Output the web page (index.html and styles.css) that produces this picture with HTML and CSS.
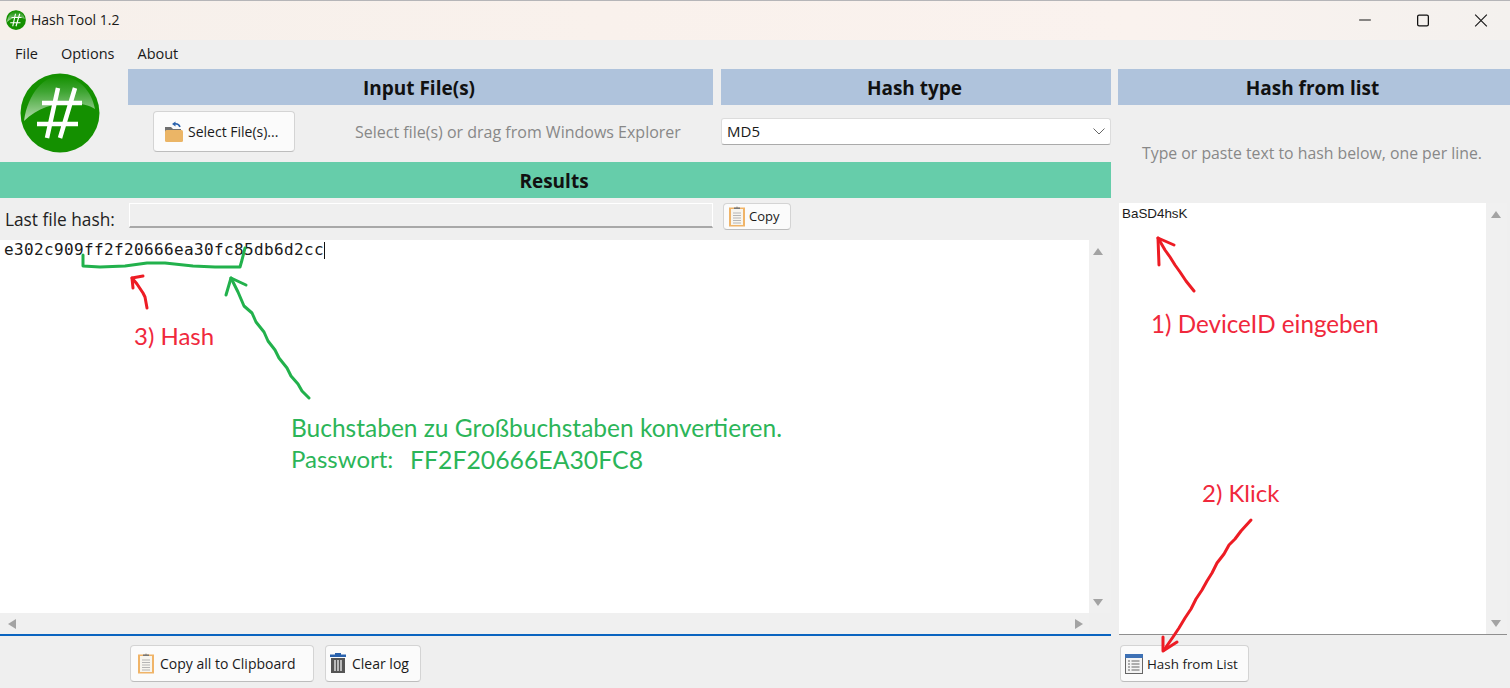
FILE: index.html
```html
<!DOCTYPE html>
<html lang="de">
<head>
    <meta charset="UTF-8">
    <meta name="viewport" content="width=device-width, initial-scale=1.0">
    <title>Hash Tool 1.2</title>
    <link rel="stylesheet" href="styles.css">
</head>
<body>
    <svg class="icon-defs" width="0" height="0">
        <defs>
            <linearGradient id="gloss" x1="0" y1="0" x2="0" y2="1">
                <stop offset="0" stop-color="#149000"/>
                <stop offset="0.35" stop-color="#3fa533"/>
                <stop offset="1" stop-color="#b4dcae"/>
            </linearGradient>
            <symbol id="hash-logo" viewBox="0 0 80 80">
                <circle cx="40" cy="40" r="39.500" fill="#149000"/>
                <path d="M4 48C8 20 24 3 40 3 58 3 72 18 75 36 62 27 26 26 4 48z" fill="url(#gloss)"/>
                <path d="M38 15 27 65M55 15 40 65M22 30H62M17 51H58" stroke="#fff" stroke-width="4.500" fill="none"/>
            </symbol>
            <g id="clip-icon">
                <rect x="1" y="2.500" width="16" height="19" fill="#f0b468"/>
                <rect x="3" y="4" width="12" height="16" fill="#f7f5ef"/>
                <path d="M5 8h8M5 10.500h8M5 13h8M5 15.500h8M5 18h8" stroke="#b5b5b5" stroke-width="1"/>
                <path d="M6 4V2.500h2.500L9 1l.5 1.500H12V4z" fill="#777"/>
            </g>
        </defs>
    </svg>

    <div class="titlebar">
        <svg class="title-logo"><use href="#hash-logo"/></svg>
        <span class="title-text">Hash Tool 1.2</span>
        <div class="win-buttons">
            <svg class="win-btn" viewBox="0 0 58 40"><path d="M23 19.500H35" stroke="#111" stroke-width="1"/></svg>
            <svg class="win-btn" viewBox="0 0 58 40"><rect x="23.500" y="14.500" width="11" height="11" rx="1.500" fill="none" stroke="#111" stroke-width="1.300"/></svg>
            <svg class="win-btn" viewBox="0 0 58 40"><path d="M23 14 35 26M35 14 23 26" stroke="#111" stroke-width="1.100"/></svg>
        </div>
    </div>

    <div class="menubar">
        <span>File</span>
        <span>Options</span>
        <span>About</span>
    </div>

    <div class="main">
        <div class="left">
            <div class="top">
                <div class="logo">
                    <svg width="80" height="80"><use href="#hash-logo"/></svg>
                </div>
                <div class="input-col">
                    <div class="head blue">Input File(s)</div>
                    <div class="input-row">
                        <button class="btn select-btn">
                            <svg width="20" height="22" viewBox="0 0 20 22">
                                <path d="M1 6h6l2 2h8v3H1z" fill="#6f6f6f"/>
                                <rect x="1" y="9" width="18" height="12" rx="1.500" fill="#ebb566"/>
                                <path d="M16 6C15 3 13 2.500 10 3" fill="none" stroke="#2a62ad" stroke-width="1.500"/>
                                <path d="M8 3l3.500-2.500v5z" fill="#2a62ad"/>
                            </svg>
                            Select File(s)...
                        </button>
                        <span class="hint">Select file(s) or drag from Windows Explorer</span>
                    </div>
                </div>
                <div class="type-col">
                    <div class="head blue">Hash type</div>
                    <div class="type-row">
                        <div class="combo">
                            <span>MD5</span>
                            <svg width="12" height="7" viewBox="0 0 12 7"><path d="M.5 .5 6 6 11.500 .5" fill="none" stroke="#666" stroke-width="1"/></svg>
                        </div>
                    </div>
                </div>
            </div>

            <div class="head green">Results</div>

            <div class="last-row">
                <span class="last-label">Last file hash:</span>
                <div class="last-field"></div>
                <button class="btn copy-btn">
                    <svg width="18" height="22" viewBox="0 0 18 22"><use href="#clip-icon"/></svg>
                    Copy
                </button>
            </div>

            <div class="log">
                <div class="log-text">e302c909ff2f20666ea30fc85db6d2cc<span class="caret"></span></div>
                <div class="vscroll">
                    <span class="arrow up"></span>
                    <span class="arrow down"></span>
                </div>
                <div class="hscroll">
                    <span class="arrow left-arrow"></span>
                    <span class="arrow right-arrow"></span>
                </div>
                <div class="corner"></div>
            </div>

            <div class="bottom-left">
                <button class="btn clip-all">
                    <svg width="18" height="22" viewBox="0 0 18 22"><use href="#clip-icon"/></svg>
                    Copy all to Clipboard
                </button>
                <button class="btn clear-btn">
                    <svg width="18" height="22" viewBox="0 0 18 22">
                        <rect x="1" y="2.500" width="16" height="2.500" fill="#2a62ad"/>
                        <rect x="6" y="1" width="6" height="2" fill="#2a62ad"/>
                        <rect x="2" y="6" width="14" height="15" fill="#555"/>
                        <path d="M6 8v11M9 8v11M12 8v11" stroke="#ddd" stroke-width="1.500"/>
                    </svg>
                    Clear log
                </button>
            </div>
        </div>

        <div class="right">
            <div class="head blue">Hash from list</div>
            <div class="right-hint">Type or paste text to hash below, one per line.</div>
            <div class="list-box">
                <div class="list-text">BaSD4hsK</div>
                <div class="vscroll">
                    <span class="arrow up"></span>
                    <span class="arrow down"></span>
                </div>
            </div>
            <div class="bottom-right">
                <button class="btn list-btn">
                    <svg width="18" height="22" viewBox="0 0 18 22">
                        <rect x=".5" y="1.500" width="17" height="19" fill="#f4f4f4" stroke="#666"/>
                        <rect x="0" y="1" width="18" height="4" fill="#3e71b5"/>
                        <path d="M3 8h2M3 11h2M3 14h2M3 17h2M6.500 8h8M6.500 11h8M6.500 14h8M6.500 17h8" stroke="#666" stroke-width="1.200"/>
                    </svg>
                    Hash from List
                </button>
            </div>
        </div>
    </div>

    <!-- hand drawn notes on top of the screenshot -->
    <svg class="scribble" width="1510" height="688" viewBox="0 0 1510 688">
        <g class="ink-green">
            <path d="M83 255 83 266 100 267 125 266 147 263 165 263 193 266 215 267 240 267 242 260 245 248"/>
            <path d="M309 398 302 391 298 384 291 376 287 368 279 358 275 350 268 341 264 332 256 322 252 313 244 306 238 292 231 278"/>
            <path d="M226 295 231 278 246 285"/>
        </g>
        <g class="ink-red">
            <path d="M147 308 145 297 143 293 137 284 132 278"/>
            <path d="M133 288 132 278 143 276"/>
            <path d="M1194 291 1186 281 1180 272 1175 265 1170 257 1165 250 1158 238"/>
            <path d="M1159 265 1158 238 1174 245"/>
            <path d="M1251 520 1241 531 1235 539 1229 545 1224 554 1217 563 1212 573 1207 581 1202 590 1196 599 1191 609 1185 618 1179 628 1173 637 1164 650"/>
            <path d="M1163 637 1163 651 1177 642"/>
        </g>
    </svg>
    <span class="note red note-hash">3) Hash</span>
    <span class="note red note-device">1) DeviceID eingeben</span>
    <span class="note red note-klick">2) Klick</span>
    <span class="note green-ink note-convert">Buchstaben zu Großbuchstaben konvertieren.</span>
    <span class="note green-ink note-pass">Passwort:</span>
    <span class="note green-ink note-value">FF2F20666EA30FC8</span>
</body>
</html>
```

FILE: styles.css
```css
html, body {
    margin: 0;
    height: 100%;
}
body {
    width: 1510px;
    height: 688px;
    overflow: hidden;
    position: relative;
    background: #efefef;
    color: #1a1a1a;
    font-family: "Open Sans", "Noto Sans", sans-serif;
}
.icon-defs {
    position: absolute;
}

.titlebar {
    height: 39px;
    border-top: 1px solid #b5b5b8;
    display: flex;
    align-items: center;
    background: linear-gradient(90deg, #f6f0eb 0%, #f9f1ec 40%, #faf2ee 75%, #f4f1ee 100%);
}
.title-logo {
    width: 20px;
    height: 20px;
    margin-left: 6px;
    margin-top: -2px;
}
.title-text {
    margin-left: 5px;
    margin-top: -2px;
    font-size: 14px;
}
.win-buttons {
    margin-left: auto;
    display: flex;
}
.win-btn {
    width: 58px;
    height: 39px;
    display: block;
}

.menubar {
    height: 26px;
    padding-bottom: 2px;
    display: flex;
    align-items: center;
    gap: 23px;
    padding-left: 15px;
    font-size: 14.500px;
}

.main {
    display: flex;
    gap: 7px;
    padding-top: 1px;
}
.left {
    width: 1111px;
}
.right {
    width: 392px;
}

.top {
    display: flex;
    height: 93px;
}
.logo {
    width: 128px;
    padding: 4px 0 0 20px;
    box-sizing: border-box;
}
.input-col {
    width: 585px;
}
.type-col {
    width: 390px;
    margin-left: 8px;
}
.head {
    height: 36px;
    line-height: 38px;
    padding-right: 3px;
    box-sizing: border-box;
    text-align: center;
    font-weight: 700;
    font-size: 19px;
    color: #111;
}
.blue {
    background: #afc3dc;
}
.green {
    background: #66cdaa;
}

.input-row {
    display: flex;
    align-items: center;
    height: 53px;
}
.btn {
    display: flex;
    align-items: center;
    background: #fbfbfb;
    border: 1px solid #d4d4d4;
    border-bottom-color: #bdbdbd;
    border-radius: 4px;
    padding: 0;
    box-sizing: border-box;
    font-family: inherit;
    font-size: 14px;
    color: #1a1a1a;
}
.select-btn {
    width: 142px;
    height: 41px;
    margin-left: 25px;
    padding-left: 10px;
    gap: 4px;
}
.hint {
    margin-left: 60px;
    font-size: 16px;
    color: #888;
}
.type-row {
    height: 53px;
    display: flex;
    align-items: center;
}
.combo {
    width: 100%;
    height: 27px;
    margin-top: -1px;
    box-sizing: border-box;
    background: #fff;
    border: 1px solid #dcdcdc;
    border-bottom-color: #aaa;
    border-radius: 3px;
    display: flex;
    align-items: center;
    justify-content: space-between;
    padding: 0 5px 0 5px;
    font-size: 15px;
}

.last-row {
    height: 42px;
    display: flex;
    align-items: center;
}
.last-label {
    width: 129px;
    padding-left: 5px;
    box-sizing: border-box;
    font-size: 17.300px;
    color: #222;
}
.last-field {
    width: 584px;
    height: 25px;
    box-sizing: border-box;
    margin-top: -8px;
    border: 1px solid #fff;
    border-bottom: 2px solid #a8a8a8;
    background: #efefef;
}
.copy-btn {
    width: 68px;
    height: 27px;
    margin-left: 10px;
    margin-top: -6px;
    padding-left: 4px;
    gap: 3px;
    font-size: 13px;
}

.log {
    height: 394px;
    display: grid;
    grid-template-columns: 1fr 22px;
    grid-template-rows: 1fr 21px;
}
.log-text {
    background: #fff;
    padding: 0 0 0 4px;
    font-family: "DejaVu Sans Mono", monospace;
    font-size: 16px;
    letter-spacing: 0.370px;
    line-height: 19px;
    color: #1a1a1a;
}
.caret {
    display: inline-block;
    width: 1px;
    height: 17px;
    background: #111;
    vertical-align: -4px;
}
.vscroll {
    background: #f0f0f0;
    display: flex;
    flex-direction: column;
    justify-content: space-between;
    align-items: center;
    padding: 8px 4px 7px 0;
}
.hscroll {
    background: #f0f0f0;
    display: flex;
    justify-content: space-between;
    align-items: center;
    padding: 0 6px 0 8px;
}
.corner {
    background: #efefef;
}
.arrow {
    display: block;
    width: 0;
    height: 0;
    border: 5px solid transparent;
}
.up {
    border-top: 0;
    border-bottom: 7px solid #a3a3a3;
    border-left-width: 5.500px;
    border-right-width: 5.500px;
}
.down {
    border-bottom: 0;
    border-top: 7px solid #a3a3a3;
    border-left-width: 5.500px;
    border-right-width: 5.500px;
}
.left-arrow {
    border-left: 0;
    border-right: 8px solid #a3a3a3;
}
.right-arrow {
    border-right: 0;
    border-left: 8px solid #a3a3a3;
}

.bottom-left {
    border-top: 2px solid #0a64c0;
    height: 50px;
    padding-top: 2px;
    display: flex;
    align-items: center;
    padding-left: 130px;
    gap: 11px;
}
.clip-all {
    width: 184px;
    height: 37px;
    padding-left: 6px;
    gap: 5px;
}
.clear-btn {
    width: 96px;
    height: 37px;
    padding-left: 3px;
    gap: 5px;
}

.right-hint {
    height: 96px;
    padding-bottom: 2px;
    display: flex;
    align-items: center;
    justify-content: center;
    padding-right: 4px;
    font-size: 15.800px;
    color: #888;
}
.list-box {
    height: 432px;
    margin-left: 1px;
    width: 388px;
    background: #fff;
    border-bottom: 1px solid #8f8f8f;
    box-sizing: border-box;
    display: flex;
}
.list-text {
    flex: 1;
    padding: 2px 0 0 3px;
    font-family: "Liberation Sans", sans-serif;
    font-size: 13.400px;
    line-height: 18px;
    color: #1a1a1a;
}
.list-box .vscroll {
    width: 21px;
    box-sizing: border-box;
    padding-right: 1px;
}
.bottom-right {
    height: 49px;
    padding-top: 4px;
    display: flex;
    align-items: center;
    padding-left: 2px;
}
.list-btn {
    width: 129px;
    height: 37px;
    padding-left: 4px;
    gap: 4px;
    font-size: 13.400px;
}

/* notes */
.scribble {
    position: absolute;
    left: 0;
    top: 0;
    pointer-events: none;
}
.scribble path {
    fill: none;
    stroke-width: 3px;
    stroke-linejoin: round;
    stroke-linecap: round;
}
.ink-green path {
    stroke: #22b14c;
}
.ink-red path {
    stroke: #ed1c24;
}
.note {
    position: absolute;
    font-family: "Lato", sans-serif;
    font-size: 24.200px;
    line-height: 30px;
    white-space: nowrap;
}
.red {
    color: #f0283c;
}
.green-ink {
    color: #2bb558;
}
.note-hash { left: 134px; top: 321px; font-size: 24px; }
.note-device { left: 1151px; top: 309px; }
.note-klick { left: 1202px; top: 478px; font-size: 24px; }
.note-convert { left: 291px; top: 413px; font-size: 24.500px; }
.note-pass { left: 291px; top: 444px; font-size: 24px; }
.note-value { left: 410px; top: 445px; font-size: 24.800px; }
```
